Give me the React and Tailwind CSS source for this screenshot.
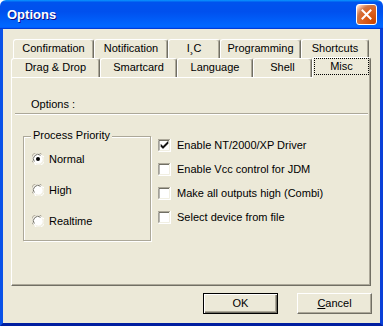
import React from 'react';

const face = 'bg-[#ECE9D8]';

const Tab = ({ label, width, selected }) => (
  <div
    className={`relative flex items-center justify-center border-l border-t border-r border-l-white border-t-white border-r-[#716F64] rounded-t-[3px] shadow-[inset_-1px_0_0_#ACA899] ${face} ${
      selected ? 'z-10 h-[21px] -mb-[1px] pb-[3px]' : 'h-[19px] pb-[1px]'
    }`}
    style={{ width }}
  >
    {selected ? (
      <span className="self-stretch flex-1 flex items-center justify-center mx-[1px] border border-dotted border-black leading-[13px]">
        {label}
      </span>
    ) : (
      <span className="leading-[13px]">{label}</span>
    )}
  </div>
);

const CheckBox = ({ checked }) => (
  <svg width="13" height="13" viewBox="0 0 13 13" className="shrink-0">
    <rect x="0" y="0" width="13" height="13" fill="#ffffff" />
    <path d="M0 12.5V0.5H12.5" stroke="#ACA899" fill="none" />
    <path d="M1 11.5V1.5H11.5" stroke="#716F64" fill="none" />
    <path d="M0.5 12.5H12.5V0" stroke="#ffffff" fill="none" />
    <path d="M1.5 11.5H11.5V1" stroke="#F1EFE2" fill="none" />
    {checked && <path d="M3 5.5L5 7.5L10 2.5V4.5L5 9.5L3 7.5Z" fill="#000" stroke="#000" strokeWidth="0.6" />}
  </svg>
);

const Radio = ({ checked }) => (
  <svg width="12" height="12" viewBox="0 0 12 12" className="shrink-0">
    <circle cx="6" cy="6" r="5.5" fill="#ffffff" />
    <path d="M1.2 9.5A5.5 5.5 0 0 1 9.5 1.2" stroke="#ACA899" fill="none" />
    <path d="M2.3 8.6A4.5 4.5 0 0 1 8.6 2.3" stroke="#716F64" fill="none" />
    <path d="M10.8 2.5A5.5 5.5 0 0 1 2.5 10.8" stroke="#ffffff" fill="none" />
    <path d="M9.8 3.4A4.5 4.5 0 0 1 3.4 9.8" stroke="#F1EFE2" fill="none" />
    {checked && <circle cx="6" cy="6" r="2" fill="#000" />}
  </svg>
);

const Button = ({ children, isDefault }) => (
  <div
    className={`w-[75px] h-[21px] flex items-center justify-center ${face} ${
      isDefault
        ? 'border border-black shadow-[inset_1px_1px_0_#fff,inset_-1px_-1px_0_#716F64,inset_-2px_-2px_0_#ACA899]'
        : 'border border-t-white border-l-white border-r-[#716F64] border-b-[#716F64] shadow-[inset_-1px_-1px_0_#ACA899]'
    }`}
  >
    {children}
  </div>
);

export default function App() {
  const row1 = [
    ['Confirmation', 81],
    ['Notification', 74],
    ['I\u00B8C', 52],
    ['Programming', 81],
    ['Shortcuts', 68],
  ];
  const row2 = [
    ['Drag & Drop', 89],
    ['Smartcard', 77],
    ['Language', 76],
    ['Shell', 59],
    ['Misc', 59, true],
  ];
  const checks = [
    ['Enable NT/2000/XP Driver', true],
    ['Enable Vcc control for JDM', false],
    ['Make all outputs high (Combi)', false],
    ['Select device from file', false],
  ];

  return (
    <div className="w-[383px] h-[326px] flex flex-col font-['Liberation_Sans',Arial,sans-serif] text-[11px] text-black select-none">
      {/* title bar */}
      <div className="h-[29px] shrink-0 flex items-center pl-[7px] pr-[6px] rounded-t-[6px] bg-[linear-gradient(to_bottom,#0997ff,#0053ee_8%,#0050ee_40%,#0066ff_88%,#0066ff_93%,#005bff_95%,#003dd7_96%,#003dd7)]">
        <span className="flex-1 text-white font-bold text-[13px] [text-shadow:1px_1px_0_#0F1089] pt-[1px]">Options</span>
        <div className="w-[21px] h-[21px] rounded-[3px] border border-white flex items-center justify-center bg-[radial-gradient(circle_at_90%_90%,#cc4600_0%,#dc6527_55%,#cd7546_70%,#ffccb2_90%,#fff_100%)]">
          <svg width="11" height="11" viewBox="0 0 11 11">
            <path d="M1.5 1.5L9.5 9.5M9.5 1.5L1.5 9.5" stroke="#fff" strokeWidth="2" strokeLinecap="square" />
          </svg>
        </div>
      </div>

      {/* client area */}
      <div className={`flex-1 flex flex-col ${face} border-l-[3px] border-r-[3px] border-b-[3px] border-l-[#0a52e8] border-r-[#0a40d8] border-b-[#001ea0]`}>
        <div className="mt-[10px] ml-[8px] mr-[9px] flex flex-col">
          <div className="flex pl-[2px] h-[19px]">
            {row1.map(([l, w]) => (
              <Tab key={l} label={l} width={w} />
            ))}
          </div>
          <div className="flex h-[19px] items-end">
            {row2.map(([l, w, s]) => (
              <Tab key={l} label={l} width={w} selected={s} />
            ))}
          </div>

          {/* panel */}
          <div className={`h-[209px] flex flex-col border border-l-white border-t-white border-r-[#716F64] border-b-[#716F64] shadow-[inset_-1px_-1px_0_#ACA899] ${face}`}>
            <div className="mt-[20px] ml-[19px] leading-[13px] h-[13px]">Options :</div>
            <div className="mt-[2px] ml-[3px] mr-[2px] h-[2px] border-t border-t-[#ACA899] border-b border-b-white" />

            <div className="flex items-start">
              {/* group box */}
              <div className="relative mt-[21px] ml-[11px] w-[128px] h-[105px] border border-[#ACA899] shadow-[1px_1px_0_#fff,inset_1px_1px_0_#fff] flex flex-col pt-[16px] pl-[8px] gap-[19px]">
                <span className={`absolute -top-[8px] left-[7px] px-[2px] leading-[13px] ${face}`}>Process Priority</span>
                {[
                  ['Normal', true],
                  ['High', false],
                  ['Realtime', false],
                ].map(([l, c]) => (
                  <div key={l} className="flex items-center gap-[5px] h-[12px]">
                    <Radio checked={c} />
                    <span className="leading-[13px]">{l}</span>
                  </div>
                ))}
              </div>

              {/* checkboxes */}
              <div className="mt-[24px] ml-[7px] flex flex-col gap-[11px]">
                {checks.map(([l, c]) => (
                  <div key={l} className="flex items-center gap-[6px] h-[13px]">
                    <CheckBox checked={c} />
                    <span className="leading-[13px]">{l}</span>
                  </div>
                ))}
              </div>
            </div>
          </div>
        </div>

        {/* buttons */}
        <div className="mt-[7px] mr-[8px] flex justify-end gap-[19px]">
          <Button isDefault>OK</Button>
          <Button>
            <span>
              <span className="underline">C</span>ancel
            </span>
          </Button>
        </div>
      </div>
    </div>
  );
}
